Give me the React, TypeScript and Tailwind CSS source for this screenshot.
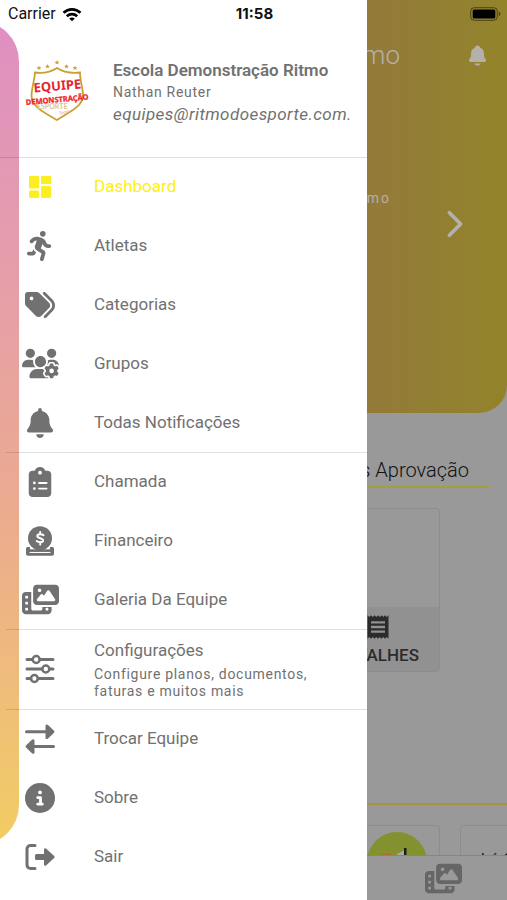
import type { ReactNode } from "react";
import {
  FaBell,
  FaCircleInfo,
  FaClipboardList,
  FaPersonRunning,
  FaPhotoFilm,
  FaTags,
  FaUsersGear,
} from "react-icons/fa6";
import { IoNotifications, IoChevronForward } from "react-icons/io5";
import { MdReceipt } from "react-icons/md";

function DashboardIcon() {
  return (
    <svg viewBox="0 0 24 24" className="size-6" fill="currentColor" aria-hidden="true">
      <rect x="1" y="1" width="10" height="12.5" rx="1" />
      <rect x="13" y="1" width="10" height="8" rx="1" />
      <rect x="1" y="15.5" width="10" height="7.5" rx="1" />
      <rect x="13" y="11" width="10" height="12" rx="1" />
    </svg>
  );
}

function CoinSlotIcon() {
  return (
    <svg viewBox="0 0 30 30" className="size-[30px]" aria-hidden="true">
      <path
        d="M2.500 21H5v3.500h20V21h2.500A1.500 1.500 0 0 1 29 22.500V28a1.800 1.800 0 0 1-1.800 1.800H2.800A1.800 1.800 0 0 1 1 28v-5.500A1.500 1.500 0 0 1 2.500 21z"
        fill="currentColor"
      />
      <rect x="4.500" y="25.800" width="21" height="1.300" rx="0.600" fill="#fff" />
      <circle cx="15" cy="12.300" r="13" fill="#fff" />
      <rect x="4.500" y="23.300" width="21" height="2.500" fill="currentColor" />
      <circle cx="15" cy="12.300" r="12" fill="currentColor" />
      <path
        d="M18.500 9.300c-1-1-5.800-1.900-6.200.6-.4 2.800 6.100 1.900 5.800 4.700-.3 2.300-4.700 2-6.400.5M15.200 6v2.300M15.200 16v2.400"
        stroke="#fff"
        strokeWidth="2"
        strokeLinecap="round"
        fill="none"
      />
    </svg>
  );
}

function TuneIcon() {
  return (
    <svg
      viewBox="0 0 30 30"
      className="size-[30px]"
      fill="none"
      stroke="currentColor"
      strokeWidth="3"
      strokeLinecap="round"
      aria-hidden="true"
    >
      <path d="M2 5.500h5.500M15 5.500h13M2 15h15M24.500 15H28M2 24.500h4M13 24.500h15" />
      <circle cx="11.200" cy="5.500" r="3.500" strokeWidth="2.500" />
      <circle cx="20.800" cy="15" r="3.500" strokeWidth="2.500" />
      <circle cx="9.400" cy="24.500" r="3.500" strokeWidth="2.500" />
    </svg>
  );
}

function SwapIcon() {
  return (
    <svg viewBox="0 0 30 30" className="size-[30px]" fill="currentColor" aria-hidden="true">
      <path d="M1.500 6.200h19V2c0-1.700 1.400-2 2.500-1l5.800 5.500c.8.8.8 1.700 0 2.400L23 14.500c-1.100 1-2.500.6-2.500-1V9.200h-19a1.500 1.500 0 0 1 0-3z" />
      <path d="M28.500 21h-19v-4.200c0-1.700-1.400-2-2.500-1l-5.800 5.500c-.8.8-.8 1.700 0 2.400L7 29.300c1.100 1 2.500.6 2.500-1V24h19a1.500 1.500 0 0 0 0-3z" />
    </svg>
  );
}

function ExitIcon() {
  return (
    <svg viewBox="0 0 30 30" className="size-[30px]" fill="currentColor" aria-hidden="true">
      <path
        d="M10 3.500H5.500a3.500 3.500 0 0 0-3.500 3.500v16a3.500 3.500 0 0 0 3.500 3.500H10"
        fill="none"
        stroke="currentColor"
        strokeWidth="3"
        strokeLinecap="round"
      />
      <path d="M11.500 12H19V7.800c0-1.600 1.300-2 2.300-1l7.600 7c.9.800.9 1.600 0 2.400l-7.600 7c-1 1-2.300.5-2.300-1V18h-7.500A1.500 1.500 0 0 1 10 16.500v-3a1.500 1.500 0 0 1 1.500-1.500z" />
    </svg>
  );
}

function Star({ x, y }: { x: number; y: number }) {
  return (
    <path
      transform={`translate(${x} ${y})`}
      d="M0-2.400.7-.8 2.400-.7 1.100.4 1.500 2 0 1.100-1.500 2-1.100.4-2.400-.7-.7-.8z"
      fill="#c9a12f"
    />
  );
}

function Crest() {
  return (
    <svg viewBox="0 0 64 64" className="size-16 shrink-0" role="img" aria-label="Equipe Demonstração">
      <Star x={14} y={8} />
      <Star x={22.5} y={6.5} />
      <Star x={32} y={2.5} />
      <Star x={41.5} y={6.5} />
      <Star x={50} y={8} />
      <path
        d="M10 12.500C18 13.500 26 12 32 8c6 4 14 5.500 23 4.500 0 8 2.500 14 3 22C58.500 46 46 51 32 60 18 52 6 46 6.500 35 7 26 9.500 21 10 12.500z"
        fill="#fff"
        stroke="#c9a12f"
        strokeWidth="1.800"
      />
      <text x="12" y="48.500" fontFamily="Lato, sans-serif" fontSize="7" fontWeight="700" fill="#dcc58c">
        ESPORTE
      </text>
      <text x="34" y="55" fontFamily="Lato, sans-serif" fontSize="5" fontStyle="italic" fill="#f0a090" transform="rotate(-12 34 55)">
        Team
      </text>
      <text x="9" y="32.500" fontFamily="Noto Sans, sans-serif" fontSize="13" fontWeight="700" fill="#e8252b" transform="rotate(-5 9 32.500)">
        EQUIPE
      </text>
      <text x="1" y="45" fontFamily="Noto Sans, sans-serif" fontSize="7.500" fontWeight="700" fill="#f01f28" stroke="#f01f28" strokeWidth="0.300" transform="rotate(-5 1 45)">
        DEMONSTRAÇÃO
      </text>
    </svg>
  );
}

function WifiIcon() {
  return (
    <svg viewBox="0 0 20 15" className="h-[15px] w-5" fill="none" stroke="#000" strokeWidth="2.700" aria-hidden="true">
      <path d="M1.500 5.800C6.500 1.200 13.500 1.200 18.500 5.800" />
      <path d="M4.800 9.200c3-2.700 7.400-2.700 10.400 0" />
      <path d="M10 14.300 7.200 11.500c1.600-1.500 4-1.500 5.600 0z" fill="#000" stroke="none" />
    </svg>
  );
}

function StatusBar() {
  return (
    <div className="absolute inset-x-0 top-0 z-20 grid h-7 grid-cols-3 items-center pr-1.5 pl-2 text-[#111]">
      <div className="flex items-center gap-1.5 text-base">
        Carrier <WifiIcon />
      </div>
      <div className="text-center font-['Inter',sans-serif] text-[15px] font-bold">11:58</div>
      <svg viewBox="0 0 31 14" className="h-3.5 w-[31px] justify-self-end" aria-hidden="true">
        <rect x="0.700" y="0.700" width="26.600" height="12.600" rx="3.500" fill="none" stroke="#4a421b" />
        <rect x="2.700" y="2.500" width="22.600" height="9" rx="1.500" fill="#000" />
        <path d="M28.800 4.800c2 .7 2 3.700 0 4.400z" fill="#4a421b" />
      </svg>
    </div>
  );
}

function Item({ icon, label, active }: { icon: ReactNode; label: string; active?: boolean }) {
  return (
    <li>
      <a
        href="#"
        className={`flex h-[59px] items-center gap-7 pl-[14px] text-[17px] ${active ? "text-[#fdee21]" : "text-[#717171]"}`}
      >
        <span className="flex w-10 shrink-0 justify-center">{icon}</span>
        <span className="pl-1.5">{label}</span>
      </a>
    </li>
  );
}

const line = "ml-1.5 shadow-[inset_0_1px_0_rgba(0,0,0,0.12)]";

function Drawer() {
  return (
    <aside className="absolute inset-y-0 left-0 z-10 w-[367px] overflow-hidden bg-white">
      <div className="absolute top-[21px] -left-24 h-[824px] w-[115px] rounded-[40px] bg-linear-to-b from-[#e08fc2] via-[#ebab8e] via-60% to-[#f2cd62]" />
      <div className="relative">
        <header className="-mb-px flex h-[158px] items-center gap-6 border-b border-black/12 pt-[26px] pr-4 pl-[25px] text-[#717171]">
          <Crest />
          <div className="min-w-0 flex-1">
            <h1 className="truncate text-[17px] leading-[22px] font-semibold">Escola Demonstração Ritmo</h1>
            <p className="text-sm leading-[22px] tracking-wider">Nathan Reuter</p>
            <p className="text-[17px] leading-[22px] tracking-wide whitespace-nowrap italic">
              equipes@ritmodoesporte.com.
            </p>
          </div>
        </header>
        <nav>
          <ul className="ml-1.5">
            <Item active icon={<DashboardIcon />} label="Dashboard" />
            <Item icon={<FaPersonRunning className="size-[30px]" />} label="Atletas" />
            <Item icon={<FaTags className="size-[30px]" />} label="Categorias" />
            <Item icon={<FaUsersGear className="size-[37px]" />} label="Grupos" />
            <Item icon={<FaBell className="size-[30px]" />} label="Todas Notificações" />
          </ul>
          <ul className={line}>
            <Item icon={<FaClipboardList className="size-[30px]" />} label="Chamada" />
            <Item icon={<CoinSlotIcon />} label="Financeiro" />
            <Item icon={<FaPhotoFilm className="size-[37px]" />} label="Galeria Da Equipe" />
          </ul>
          <div className={line}>
            <a href="#" className="flex h-20 items-center gap-7 pl-[14px] text-[#717171]">
              <span className="flex w-10 shrink-0 justify-center">
                <TuneIcon />
              </span>
              <span className="w-60 pl-1.5">
                <span className="block text-[17px] leading-6">Configurações</span>
                <span className="mt-1 block text-sm leading-[17px] tracking-wider">
                  Configure planos, documentos, faturas e muitos mais
                </span>
              </span>
            </a>
          </div>
          <ul className={line}>
            <Item icon={<SwapIcon />} label="Trocar Equipe" />
            <Item icon={<FaCircleInfo className="size-[30px]" />} label="Sobre" />
            <Item icon={<ExitIcon />} label="Sair" />
          </ul>
        </nav>
      </div>
    </aside>
  );
}

export default function App() {
  return (
    <div className="relative flex h-screen flex-col overflow-hidden bg-[#999] font-['Roboto',sans-serif]">
      <StatusBar />
      <Drawer />
      <main className="min-h-0 flex-1 overflow-hidden">
        <section className="h-[413px] rounded-br-[28px] bg-linear-to-r from-[#93703f] from-50% via-[#937b38] via-75% to-[#92842a] pt-[27px] text-[#b5b0ac]">
          <div className="flex h-14 items-center justify-end gap-[66px] pr-[18px]">
            <span className="text-[26px] font-light">Ritmo</span>
            <button type="button" aria-label="Notificações">
              <IoNotifications className="size-[23px]" />
            </button>
          </div>
          <div className="mt-[85px] flex justify-end gap-11 pr-8">
            <span className="pt-5 text-sm tracking-[2px]">Ritmo</span>
            <button type="button" aria-label="Próximo" className="pt-9">
              <IoChevronForward className="size-10" />
            </button>
          </div>
        </section>
        <section className="pt-11">
          <h2 className="mr-[18px] border-b-2 border-[#a3a03c] pr-5 pb-[3px] text-right text-xl leading-[26px] font-light text-[#111]">
            s Aprovação
          </h2>
          <article className="mt-5 ml-5 flex h-[164px] w-[420px] flex-col justify-end rounded border border-[#8c8c8c]">
            <button
              type="button"
              className="flex h-16 flex-col items-end bg-[#919191] pt-1.5 pr-5 text-[17px] leading-7 font-medium text-[#2b2b2b]"
            >
              <span className="flex flex-col items-center">
                <MdReceipt className="size-7" />
                DETALHES
              </span>
            </button>
          </article>
        </section>
        <section className="mt-[131px] border-t-2 border-[#a3963c] pt-5">
          <div className="flex gap-5 pl-5">
            <article className="flex h-40 w-[420px] shrink-0 justify-end rounded border border-[#8c8c8c] pt-1.5 pr-3">
              <svg viewBox="0 0 60 60" className="size-[60px]" aria-hidden="true">
                <circle cx="30" cy="30" r="30" fill="#83922f" />
                <path d="M14 22.500 24 21v6H14z" fill="#b06a35" />
                <path d="M30 22 38 18v10H28z" fill="#a9a9a9" />
                <path d="M37 16h2.500v12H37z" fill="#1d1d1d" />
              </svg>
            </article>
            <article className="h-40 w-[420px] shrink-0 rounded border border-[#8c8c8c] pt-[22px] pl-5 text-base text-[#1c1c1c]">
              há 6
            </article>
          </div>
        </section>
      </main>
      <footer className="flex h-[45px] shrink-0 justify-end border-t border-[#858585] bg-[#999] pt-1 pr-[45px] text-[#666]">
        <button type="button" aria-label="Galeria" className="h-9">
          <FaPhotoFilm className="size-[37px]" />
        </button>
      </footer>
    </div>
  );
}
